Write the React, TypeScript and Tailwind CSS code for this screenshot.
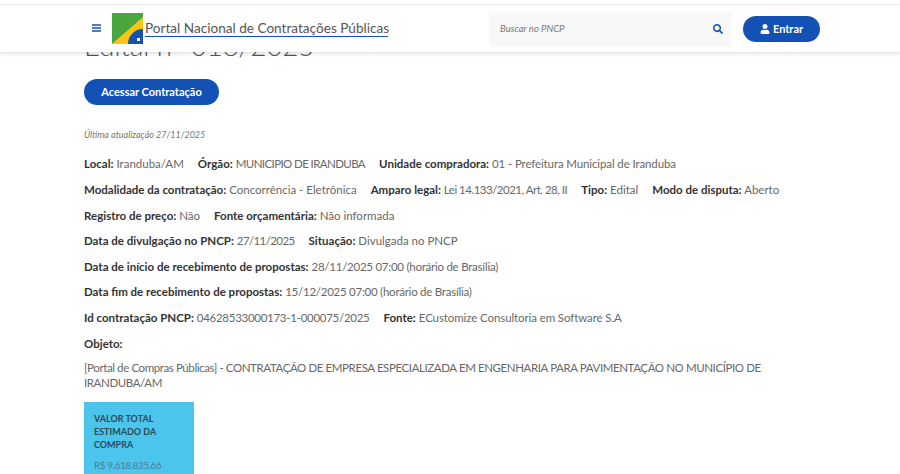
import { FaSearch, FaUser } from "react-icons/fa";

const F = "font-['Lato','Open_Sans',sans-serif]";

type Item = [string, string, string?];

function Row({ items }: { items: Item[] }) {
  return (
    <div className="flex gap-[14px] h-[18px] items-center whitespace-nowrap">
      {items.map(([k, v, t]) => (
        <span key={k}>
          <b className="font-bold text-[#333]">{k}:</b> <span className={t}>{v}</span>
        </span>
      ))}
    </div>
  );
}

export default function App() {
  return (
    <div className={`${F} w-[900px] h-[474px] overflow-hidden bg-white text-[#686868] text-[11.5px]`}>
      <div className="h-[5px] bg-white border-b border-[#eeeeee]" />
      <header className="relative z-10 h-[47px] bg-white shadow-[0_2px_4px_rgba(0,0,0,0.12)] flex items-center pl-[92px]">
        <svg width="9" height="8" viewBox="0 0 9 8" className="mr-[11px] mt-[-1px]">
          <path d="M0 1h9M0 4h9M0 7h9" stroke="#1351b4" strokeWidth="1.4" />
        </svg>
        <svg width="31" height="31" viewBox="0 0 31 31" className="mt-[-1px]">
          <rect width="31" height="31" fill="#4aa63f" />
          <path d="M31 4V31H0Z" fill="#fdc513" />
          <path d="M16 31a15 15 0 0 1 15-15V31Z" fill="#1351b4" />
          <rect x="25" y="25" width="3" height="3" fill="#fff" />
        </svg>
        <a className="ml-[2px] mt-[1px] w-[243px] text-[13.6px] text-[#555] border-b border-[#1351b4] leading-[15px] whitespace-nowrap">
          Portal Nacional de Contratações Públicas
        </a>
        <div className="ml-[101px] w-[243px] h-[35px] bg-[#f8f8f8] flex items-center justify-between pl-[11px] pr-[9px] mt-[1px]">
          <span className="italic text-[9.5px] text-[#777] mt-[1px]">Buscar no PNCP</span>
          <FaSearch size={10} className="text-[#1351b4] mt-[-1px]" />
        </div>
        <button className="ml-[11px] w-[77px] h-[26px] rounded-full bg-[#1351b4] text-white font-bold text-[11px] flex items-center justify-center gap-[3px]">
          <FaUser size={10} />
          <span className="mt-[1px]">Entrar</span>
        </button>
      </header>

      <main className="pl-[84px] pr-[120px] mt-[-23px]">
        <h1 className="text-[27.5px] leading-[33px] font-light text-[#555] whitespace-nowrap">Edital n° 018/2025</h1>
        <button className="mt-[17px] block w-[135px] h-[26px] rounded-full bg-[#1351b4] text-white font-bold text-[11px]">
          Acessar Contratação
        </button>
        <p className="mt-[24px] italic text-[9px] h-[12px] leading-[12px] text-[#777]">Última atualização 27/11/2025</p>

        <div className="mt-[14px] flex flex-col gap-[7.6px]">
          <Row items={[["Local", "Iranduba/AM"], ["Órgão", "MUNICIPIO DE IRANDUBA", "tracking-[-0.6px]"], ["Unidade compradora", "01 - Prefeitura Municipal de Iranduba", "tracking-[-0.12px]"]]} />
          <Row items={[["Modalidade da contratação", "Concorrência - Eletrônica"], ["Amparo legal", "Lei 14.133/2021, Art. 28, II", "tracking-[-0.5px]"], ["Tipo", "Edital"], ["Modo de disputa", "Aberto"]]} />
          <Row items={[["Registro de preço", "Não"], ["Fonte orçamentária", "Não informada"]]} />
          <Row items={[["Data de divulgação no PNCP", "27/11/2025", "tracking-[-0.6px]"], ["Situação", "Divulgada no PNCP"]]} />
          <Row items={[["Data de início de recebimento de propostas", "28/11/2025 07:00 (horário de Brasília)", "tracking-[-0.25px]"]]} />
          <Row items={[["Data fim de recebimento de propostas", "15/12/2025 07:00 (horário de Brasília)", "tracking-[-0.25px]"]]} />
          <Row items={[["Id contratação PNCP", "04628533000173-1-000075/2025", "tracking-[-0.28px]"], ["Fonte", "ECustomize Consultoria em Software S.A", "tracking-[-0.1px]"]]} />
          <div className="h-[18px] flex items-center font-bold text-[#333]">Objeto:</div>
          <p className="leading-[15px] mt-[0.5px] w-[696px] tracking-[-0.4px]">
            [Portal de Compras Públicas] - CONTRATAÇÃO DE EMPRESA ESPECIALIZADA EM ENGENHARIA PARA PAVIMENTAÇÃO NO MUNICÍPIO DE IRANDUBA/AM
          </p>
        </div>

        <div className="mt-[12px] w-[110px] h-[80px] bg-[#4cc5ec] pl-[10px] pt-[10px] text-[9px] overflow-hidden">
          <div className="font-bold text-[#2b4a5c] leading-[13px]">VALOR TOTAL<br />ESTIMADO DA<br />COMPRA</div>
          <div className="mt-[7px] text-[#4a7f99] text-[10px] tracking-[-0.45px]">R$ 9.618.835,66</div>
        </div>
      </main>
    </div>
  );
}
